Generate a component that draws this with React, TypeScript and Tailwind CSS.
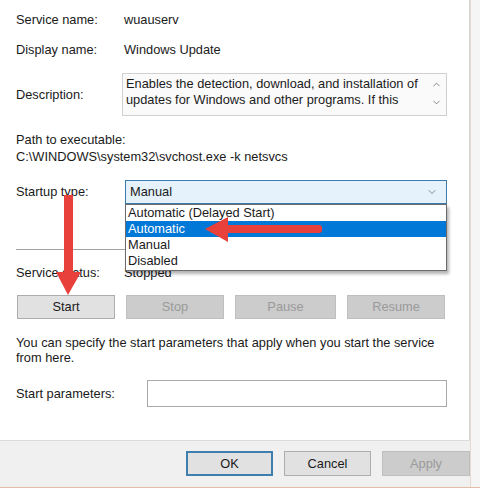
import { ChevronDown, ChevronUp } from 'lucide-react';

const font = { fontFamily: '"Liberation Sans", Arial, sans-serif' };

function Btn({ label, disabled, className = '' }: { label: string; disabled?: boolean; className?: string }) {
  return (
    <div
      className={
        'flex h-[24px] items-center justify-center border text-[12.8px] ' +
        (disabled
          ? 'border-[#bfbfbf] bg-[#cccccc] text-[#9a9a9a] '
          : 'border-[#adadad] bg-[#e1e1e1] text-[#1a1a1a] ') +
        className
      }
    >
      {label}
    </div>
  );
}

function Arrows() {
  return (
    <svg className="pointer-events-none absolute left-0 top-0" width="480" height="488">
      <g fill="#e8403a">
        <rect x="64" y="195" width="9" height="80" />
        <polygon points="56,272 81,272 68,295" />
        <rect x="226" y="225" width="96" height="8" rx="3" />
        <polygon points="228,217 228,242 205,229" />
      </g>
    </svg>
  );
}

export default function App() {
  return (
    <div className="relative h-[488px] w-[480px] overflow-hidden bg-[#f3f3f3] text-[#1a1a1a]" style={font}>
      <div className="flex h-[487px]">
        <div className="flex w-[470px] flex-col">
          <div className="flex flex-1 flex-col border-r border-[#d5d5d5] bg-white pl-[16px] pr-[22px] text-[12.8px] leading-[16px]">
            <div className="mt-[12px] flex">
              <span className="w-[108px]">Service name:</span>
              <span>wuauserv</span>
            </div>
            <div className="mt-[14px] flex">
              <span className="w-[108px]">Display name:</span>
              <span>Windows Update</span>
            </div>
            <div className="mt-[15px] flex items-center">
              <span className="w-[106px]">Description:</span>
              <div className="flex h-[43px] flex-1 border border-[#d0d0d0] bg-[#fafafa] pl-[3px] pt-[2px]">
                <div className="flex-1 leading-[16px]">
                  Enables the detection, download, and installation of updates for Windows and other programs. If this
                </div>
                <div className="flex w-[20px] flex-col items-center pt-[3px] text-[#555]">
                  <ChevronUp size={11} strokeWidth={1.5} />
                  <ChevronDown size={11} strokeWidth={1.5} className="mt-[7px]" />
                </div>
              </div>
            </div>
            <div className="mt-[16px]">Path to executable:</div>
            <div className="mt-[1px]">C:\WINDOWS\system32\svchost.exe -k netsvcs</div>
            <div className="mt-[15px] flex items-center">
              <span className="w-[109px]">Startup type:</span>
              <div className="flex h-[24px] flex-1 items-center justify-between border border-[#3d7bad] bg-[#e5f1fb] pl-[4px] pr-[8px]">
                <span>Manual</span>
                <ChevronDown size={12} strokeWidth={1.3} className="text-[#555]" />
              </div>
            </div>
            <div className="mt-[45px] h-px bg-[#a0a0a0]" />
            <div className="mt-[15px] flex">
              <span className="w-[108px]">Service status:</span>
              <span>Stopped</span>
            </div>
            <div className="mt-[14px] flex gap-[11px] pl-[1px]">
              <Btn label="Start" className="w-[98px]" />
              <Btn label="Stop" disabled className="w-[98px]" />
              <Btn label="Pause" disabled className="w-[101px]" />
              <Btn label="Resume" disabled className="w-[98px]" />
            </div>
            <div className="mt-[16px] leading-[15px]">
              You can specify the start parameters that apply when you start the service from here.
            </div>
            <div className="mt-[15px] flex items-center">
              <span className="w-[131px]">Start parameters:</span>
              <div className="h-[27px] flex-1 border border-[#a8a8a8] bg-white" />
            </div>
          </div>
          <div className="flex h-[47px] items-center justify-end gap-[11px] border-t border-[#dcdcdc] bg-[#f0f0f0] pb-[1px]">
            <div className="flex h-[25px] w-[87px] items-center justify-center border-2 border-[#3f7fae] bg-[#e1e1e1] text-[12.8px]">OK</div>
            <Btn label="Cancel" className="h-[25px] w-[87px]" />
            <Btn label="Apply" disabled className="h-[25px] w-[88px]" />
          </div>
        </div>
        <div className="flex-1 border-l border-[#ead8cc] bg-[#f5f5f5]" />
      </div>
      <div className="h-px bg-[#e3bca6]" />

      <div className="absolute left-[125px] top-[204px] w-[322px] border border-[#6b6b6b] bg-white text-[12.8px] leading-[16px] shadow-[2px_3px_3px_rgba(0,0,0,0.3)]">
        <div className="pl-[2px]">Automatic (Delayed Start)</div>
        <div className="bg-[#0078d7] pl-[2px] text-white">Automatic</div>
        <div className="pl-[2px]">Manual</div>
        <div className="pl-[2px] pb-[1px]">Disabled</div>
      </div>
      <Arrows />
    </div>
  );
}
